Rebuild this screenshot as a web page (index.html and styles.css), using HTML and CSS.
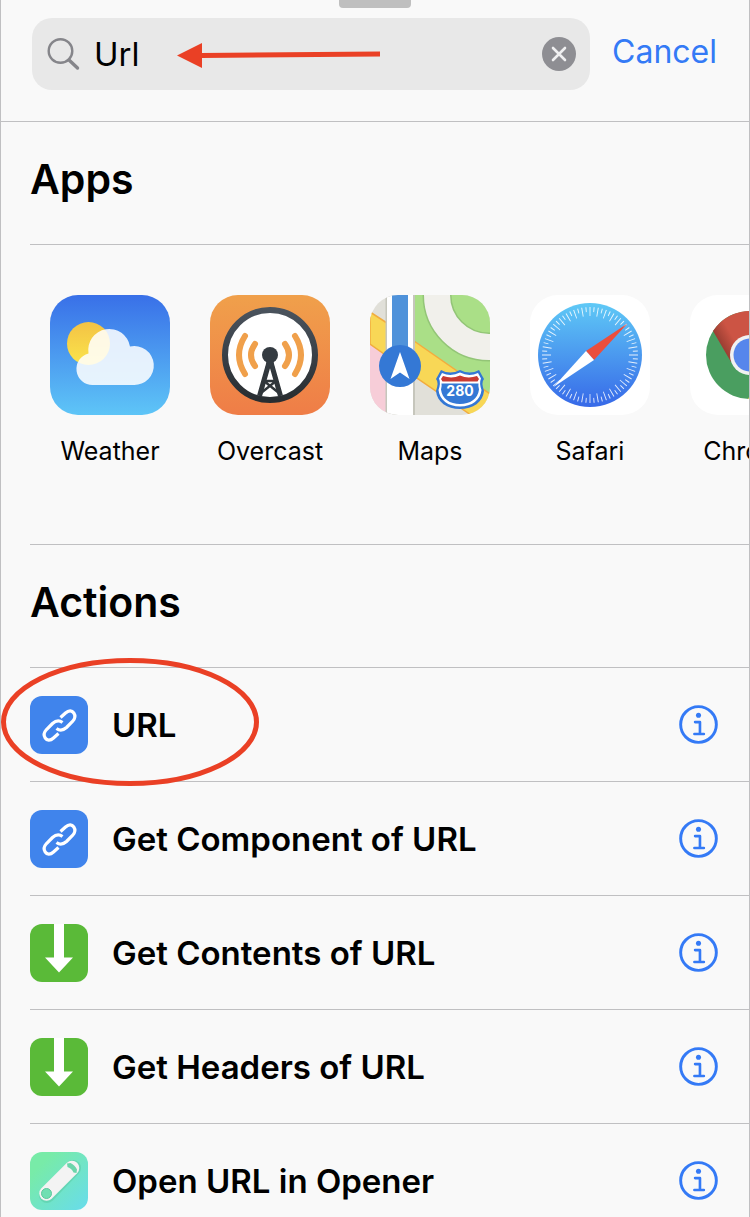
FILE: index.html
```html
<!DOCTYPE html>
<html lang="en">
<head>
<meta charset="UTF-8">
<meta name="viewport" content="width=device-width, initial-scale=1.0">
<title>Shortcuts</title>
<link rel="stylesheet" href="styles.css">
</head>
<body>

<!-- shared icons -->
<svg class="defs" width="0" height="0" aria-hidden="true">
    <symbol id="info" viewBox="0 0 40 40">
        <circle cx="20" cy="20" r="18.3" fill="none" stroke="currentColor" stroke-width="3"/>
        <circle cx="20" cy="10.5" r="2.6" fill="currentColor"/>
        <path d="M16.5 17.5H21.5V29.5M15.8 29.7H25.5" fill="none" stroke="currentColor" stroke-width="2.7" stroke-linecap="round" stroke-linejoin="round"/>
    </symbol>
    <symbol id="link" viewBox="0 0 58 58">
        <rect width="58" height="58" rx="12" fill="#4084ec"/>
        <path d="M30.5 21.5L35.5 17C39 13.8 42 14.4 43.8 17C45.6 19.7 45 22.8 42.5 25.5L36.5 31.5C33 34.6 29.5 34.8 26.5 32.5M28.5 37.5L23.5 42C20 45.2 17 44.6 15.2 42C13.4 39.3 14 36.2 16.5 33.5L22.5 27.5C26 24.4 29.5 24.2 32.5 26.5" fill="none" stroke="#fff" stroke-width="3.2"/>
    </symbol>
    <symbol id="download" viewBox="0 0 58 58">
        <rect width="58" height="58" rx="12" fill="#5aba38"/>
        <path d="M24 0H34V33.5H43L29 48.5L15 33.5H24Z" fill="#fff"/>
    </symbol>
</svg>

<main class="sheet">
    <div class="grabber"></div>

    <!-- SEARCH -->
    <form class="search-bar">
        <div class="search-field">
            <svg class="search-icon" viewBox="0 0 34 34" aria-hidden="true">
                <circle cx="14.5" cy="14" r="11.8" fill="none" stroke="#85858a" stroke-width="2.4"/>
                <path d="M23 23L31.5 31" stroke="#85858a" stroke-width="3.4" stroke-linecap="round"/>
            </svg>
            <input class="search-input" type="text" value="Url" aria-label="Search">
            <button class="clear" type="button" aria-label="Clear text">
                <svg viewBox="0 0 34 34"><circle cx="17" cy="17" r="17" fill="#8e8e93"/><path d="M11 11L23 23M23 11L11 23" stroke="#f0f0f1" stroke-width="2.6" stroke-linecap="round"/></svg>
            </button>
            <svg class="arrow" viewBox="0 0 204 26" aria-hidden="true">
                <path d="M24 13.5L203 12" stroke="#ea4025" stroke-width="5"/>
                <path d="M0 13.5L25 1V26Z" fill="#ea4025"/>
            </svg>
        </div>
        <button class="cancel" type="button">Cancel</button>
    </form>

    <!-- APPS -->
    <section class="section">
        <h2>Apps</h2>
        <ul class="apps">
            <li class="app">
                <svg class="app-icon" viewBox="0 0 120 120" aria-hidden="true">
                    <defs>
                        <linearGradient id="sky" x2="0" y2="1"><stop stop-color="#3970e8"/><stop offset="1" stop-color="#5ec5f7"/></linearGradient>
                        <linearGradient id="sun" x2="0" y2="1"><stop stop-color="#f3c245"/><stop offset="1" stop-color="#fbe54b"/></linearGradient>
                    </defs>
                    <rect width="120" height="120" fill="url(#sky)"/>
                    <circle cx="38.5" cy="48.5" r="21.5" fill="url(#sun)"/>
                    <path d="M43 90A16 16 0 0 1 38.5 58.5A21 21 0 0 1 80 51.5A19.5 19.5 0 1 1 83.5 90Z" fill="#fff" fill-opacity=".86"/>
                </svg>
                <span>Weather</span>
            </li>
            <li class="app">
                <svg class="app-icon" viewBox="0 0 120 120" aria-hidden="true">
                    <defs>
                        <linearGradient id="orange" x2="0" y2="1"><stop stop-color="#f0a04b"/><stop offset="1" stop-color="#ef7d47"/></linearGradient>
                        <linearGradient id="steel" x2="0" y2="1"><stop stop-color="#4a535d"/><stop offset="1" stop-color="#282d31"/></linearGradient>
                    </defs>
                    <rect width="120" height="120" fill="url(#orange)"/>
                    <circle cx="60" cy="60" r="45" fill="#fff" stroke="url(#steel)" stroke-width="6"/>
                    <g fill="none" stroke="#f0a04b" stroke-width="6" stroke-linecap="round">
                        <path d="M45 49Q37 60 45 71M35 41Q23 60 35 79M75 49Q83 60 75 71M85 41Q97 60 85 79"/>
                    </g>
                    <g fill="none" stroke="#30363b">
                        <path d="M60 64L49.5 101M60 64L70.5 101" stroke-width="5"/>
                        <path d="M54 86L69 98M66 86L51 98M56 86H64" stroke-width="2.4"/>
                    </g>
                    <circle cx="60" cy="60" r="8" fill="#343b41"/>
                    <path d="M57 65H63L65 76H62L60 71L58 76H55Z" fill="#343b41"/>
                </svg>
                <span>Overcast</span>
            </li>
            <li class="app">
                <svg class="app-icon" viewBox="0 0 120 120" aria-hidden="true">
                    <rect width="120" height="120" fill="#e1e0d9"/>
                    <path d="M0 49L18 61V120H0Z" fill="#f7cdd8"/>
                    <path d="M45 0H120V99L45 47Z" fill="#aadf87"/>
                    <circle cx="119" cy="0" r="52" fill="none" stroke="#93c577" stroke-width="29"/>
                    <circle cx="119" cy="0" r="52" fill="none" stroke="#f1f0eb" stroke-width="26"/>
                    <path d="M0 17L17 28V61L0 49ZM44 46L120 99V120H101L44 81Z" fill="#f8d756" stroke="#f2ac3e" stroke-width="1.5"/>
                    <rect x="15.5" width="29.5" height="120" fill="#c6c6bc"/>
                    <rect x="17" width="26" height="120" fill="#fff"/>
                    <rect x="22" width="16" height="70" fill="#4f92da"/>
                    <circle cx="30" cy="71" r="21" fill="#3478d5"/>
                    <path d="M30 57L39.5 84L30 77.5L20.5 84Z" fill="#fff"/>
                    <path d="M71 75Q80 80 90 75Q100 80 109 75L114 84Q111 87 114 96C113 107 103 114 90 114C77 114 67 107 66 96Q69 87 66 84Z" fill="#3478d5"/>
                    <path d="M72 78Q81 82 90 77.5Q99 82 108 78L111 83.5Q109 88 111.5 95C110.5 105 102 111.5 90 111.5C78 111.5 69.5 105 68.5 95Q71 88 69 83.5Z" fill="#fff"/>
                    <path d="M73 81Q82 84 90 80.5Q98 84 107 81L109 84L107.5 86.5H72.5L71 84Z" fill="#c93a32"/>
                    <path d="M71.5 88.5H108.5Q108 91 109 94.5C108 104 100 109 90 109C80 109 72 104 71 94.5Q72 91 71.5 88.5Z" fill="#3478d5"/>
                    <text class="route" x="90" y="101" text-anchor="middle">280</text>
                </svg>
                <span>Maps</span>
            </li>
            <li class="app">
                <svg class="app-icon" viewBox="0 0 120 120" aria-hidden="true">
                    <defs>
                        <linearGradient id="compass" x2="0" y2="1"><stop stop-color="#5fc9f6"/><stop offset="1" stop-color="#3769e8"/></linearGradient>
                    </defs>
                    <rect width="120" height="120" fill="#fff"/>
                    <circle cx="60" cy="60" r="52" fill="url(#compass)"/>
                    <g fill="none" stroke="#fff" stroke-opacity=".85">
                        <circle cx="60" cy="60" r="45.5" stroke-width="5" pathLength="360" stroke-dasharray="1.2 8.8" stroke-dashoffset="-4.4"/>
                        <circle cx="60" cy="60" r="43.5" stroke-width="9" pathLength="360" stroke-dasharray="1.2 8.8" stroke-dashoffset=".6"/>
                    </g>
                    <path d="M97.5 28.5L56 56L64 65Z" fill="#eb4e3d"/>
                    <path d="M56 56L64 65L23.5 92Z" fill="#fff"/>
                </svg>
                <span>Safari</span>
            </li>
            <li class="app">
                <svg class="app-icon" viewBox="0 0 120 120" aria-hidden="true">
                    <defs>
                        <linearGradient id="shade" gradientUnits="userSpaceOnUse" x1="30" y1="52" x2="44" y2="44"><stop stop-color="#943b30"/><stop offset="1" stop-color="#cc5444"/></linearGradient>
                    </defs>
                    <rect width="120" height="120" fill="#fff"/>
                    <circle cx="60" cy="60" r="44" fill="#4a9e60"/>
                    <path d="M60 40H99A44 44 0 0 1 58 104L77 70Z" fill="#f7cf4b"/>
                    <path d="M23 36A44 44 0 0 1 99 40H60L41 67Z" fill="url(#shade)"/>
                    <circle cx="60" cy="60" r="20" fill="#f1f1f1"/>
                    <circle cx="60" cy="60" r="16.5" fill="#5686ec"/>
                </svg>
                <span>Chrome</span>
            </li>
        </ul>
    </section>

    <!-- ACTIONS -->
    <section class="section">
        <h2>Actions</h2>
        <ul class="actions">
            <li class="action">
                <svg class="action-icon" aria-hidden="true"><use href="#link"/></svg>
                <span class="action-name">URL</span>
                <button class="info" type="button" aria-label="About URL"><svg><use href="#info"/></svg></button>
                <svg class="circled" viewBox="0 0 260 130" aria-hidden="true"><ellipse cx="130" cy="65" rx="126.5" ry="61.5" fill="none" stroke="#ea4025" stroke-width="5"/></svg>
            </li>
            <li class="action">
                <svg class="action-icon" aria-hidden="true"><use href="#link"/></svg>
                <span class="action-name">Get Component of URL</span>
                <button class="info" type="button" aria-label="About Get Component of URL"><svg><use href="#info"/></svg></button>
            </li>
            <li class="action">
                <svg class="action-icon" aria-hidden="true"><use href="#download"/></svg>
                <span class="action-name">Get Contents of URL</span>
                <button class="info" type="button" aria-label="About Get Contents of URL"><svg><use href="#info"/></svg></button>
            </li>
            <li class="action">
                <svg class="action-icon" aria-hidden="true"><use href="#download"/></svg>
                <span class="action-name">Get Headers of URL</span>
                <button class="info" type="button" aria-label="About Get Headers of URL"><svg><use href="#info"/></svg></button>
            </li>
            <li class="action">
                <svg class="action-icon" viewBox="0 0 58 58" aria-hidden="true">
                    <defs>
                        <linearGradient id="mint" x2="1" y2="1"><stop offset=".2" stop-color="#78eba8"/><stop offset="1" stop-color="#68dcec"/></linearGradient>
                    </defs>
                    <rect width="58" height="58" rx="12" fill="url(#mint)"/>
                    <path d="M17 43L43 16" stroke="#58c9a2" stroke-width="16" stroke-linecap="round" opacity=".5"/>
                    <path d="M16.5 41.5L42 16" stroke="#f3f3f3" stroke-width="14.5" stroke-linecap="round"/>
                    <circle cx="16.5" cy="41.5" r="5" fill="#70dfb2" stroke="#5cc79c"/>
                    <path d="M37 11.5L40.5 11Q45 13 47 17.5L46.500 21L43.5 20.500Q42 16.500 37.500 15Z" fill="#6bd5aa"/>
                </svg>
                <span class="action-name">Open URL in Opener</span>
                <button class="info" type="button" aria-label="About Open URL in Opener"><svg><use href="#info"/></svg></button>
            </li>
        </ul>
    </section>
</main>

</body>
</html>
```
FILE: styles.css
```css
:root {
    --bg: #f9f9f9;
    --line: #c0c0c2;
    --blue: #347af6;
}
* { box-sizing: border-box; }
body {
    margin: 0;
    background: var(--bg);
    color: #000;
    font-family: Inter, "Liberation Sans", sans-serif;
}
h2, ul { margin: 0; padding: 0; }
ul { list-style: none; }
svg { display: block; }
button {
    padding: 0;
    border: none;
    background: none;
    font: inherit;
    cursor: pointer;
}
.defs { position: absolute; }
.sheet {
    position: relative;
    height: 100vh;
    overflow: hidden;
    border: solid var(--line);
    border-width: 0 1px;
}
.grabber {
    position: absolute;
    top: 0;
    left: 50%;
    width: 72px;
    height: 8px;
    margin-left: -36px;
    border-radius: 0 0 4px 4px;
    background: #bfbfbf;
}

/* search */
.search-bar {
    display: flex;
    align-items: flex-start;
    gap: 22px;
    padding: 18px 32px 31px 31px;
    border-bottom: 1px solid var(--line);
}
.search-field {
    position: relative;
    display: flex;
    flex: 1;
    align-items: center;
    min-width: 0;
    height: 72px;
    padding: 0 14px;
    border-radius: 20px;
    background: #e8e8e8;
}
.search-icon {
    flex: none;
    width: 34px;
    height: 34px;
}
.search-input {
    flex: 1;
    width: 0;
    min-width: 0;
    padding: 0 0 0 14px;
    border: none;
    outline: none;
    background: none;
    color: #000;
    font: inherit;
    font-size: 33px;
}
.clear svg { width: 34px; height: 34px; }
.arrow {
    position: absolute;
    top: 24px;
    left: 145px;
    width: 204px;
    height: 26px;
}
.cancel {
    flex: none;
    color: var(--blue);
    font-size: 32px;
    line-height: 68px;
}

/* sections */
.section { padding-left: 29px; }
.section h2 {
    padding: 29px 0 37px;
    border-bottom: 1px solid var(--line);
    font-size: 41px;
    font-weight: 600;
    line-height: 56px;
}
.apps {
    display: flex;
    overflow: hidden;
    padding: 50px 0 76px;
    border-bottom: 1px solid var(--line);
}
.app {
    display: flex;
    flex: none;
    flex-direction: column;
    align-items: center;
    gap: 20px;
    width: 160px;
    font-size: 25px;
    line-height: 33px;
}
.app-icon {
    width: 120px;
    height: 120px;
    border-radius: 28px;
}
.route {
    fill: #fff;
    font-size: 14px;
    font-weight: 700;
}
.action {
    position: relative;
    display: flex;
    align-items: center;
    gap: 24px;
    height: 114px;
    padding-right: 31px;
    border-bottom: 1px solid var(--line);
}
.action-icon { width: 58px; height: 58px; }
.action-name {
    flex: 1;
    font-size: 33px;
    font-weight: 600;
}
.info { color: var(--blue); }
.info svg { width: 39px; height: 39px; }
.circled {
    position: absolute;
    top: -11px;
    left: -30px;
    width: 260px;
    height: 130px;
}
```
